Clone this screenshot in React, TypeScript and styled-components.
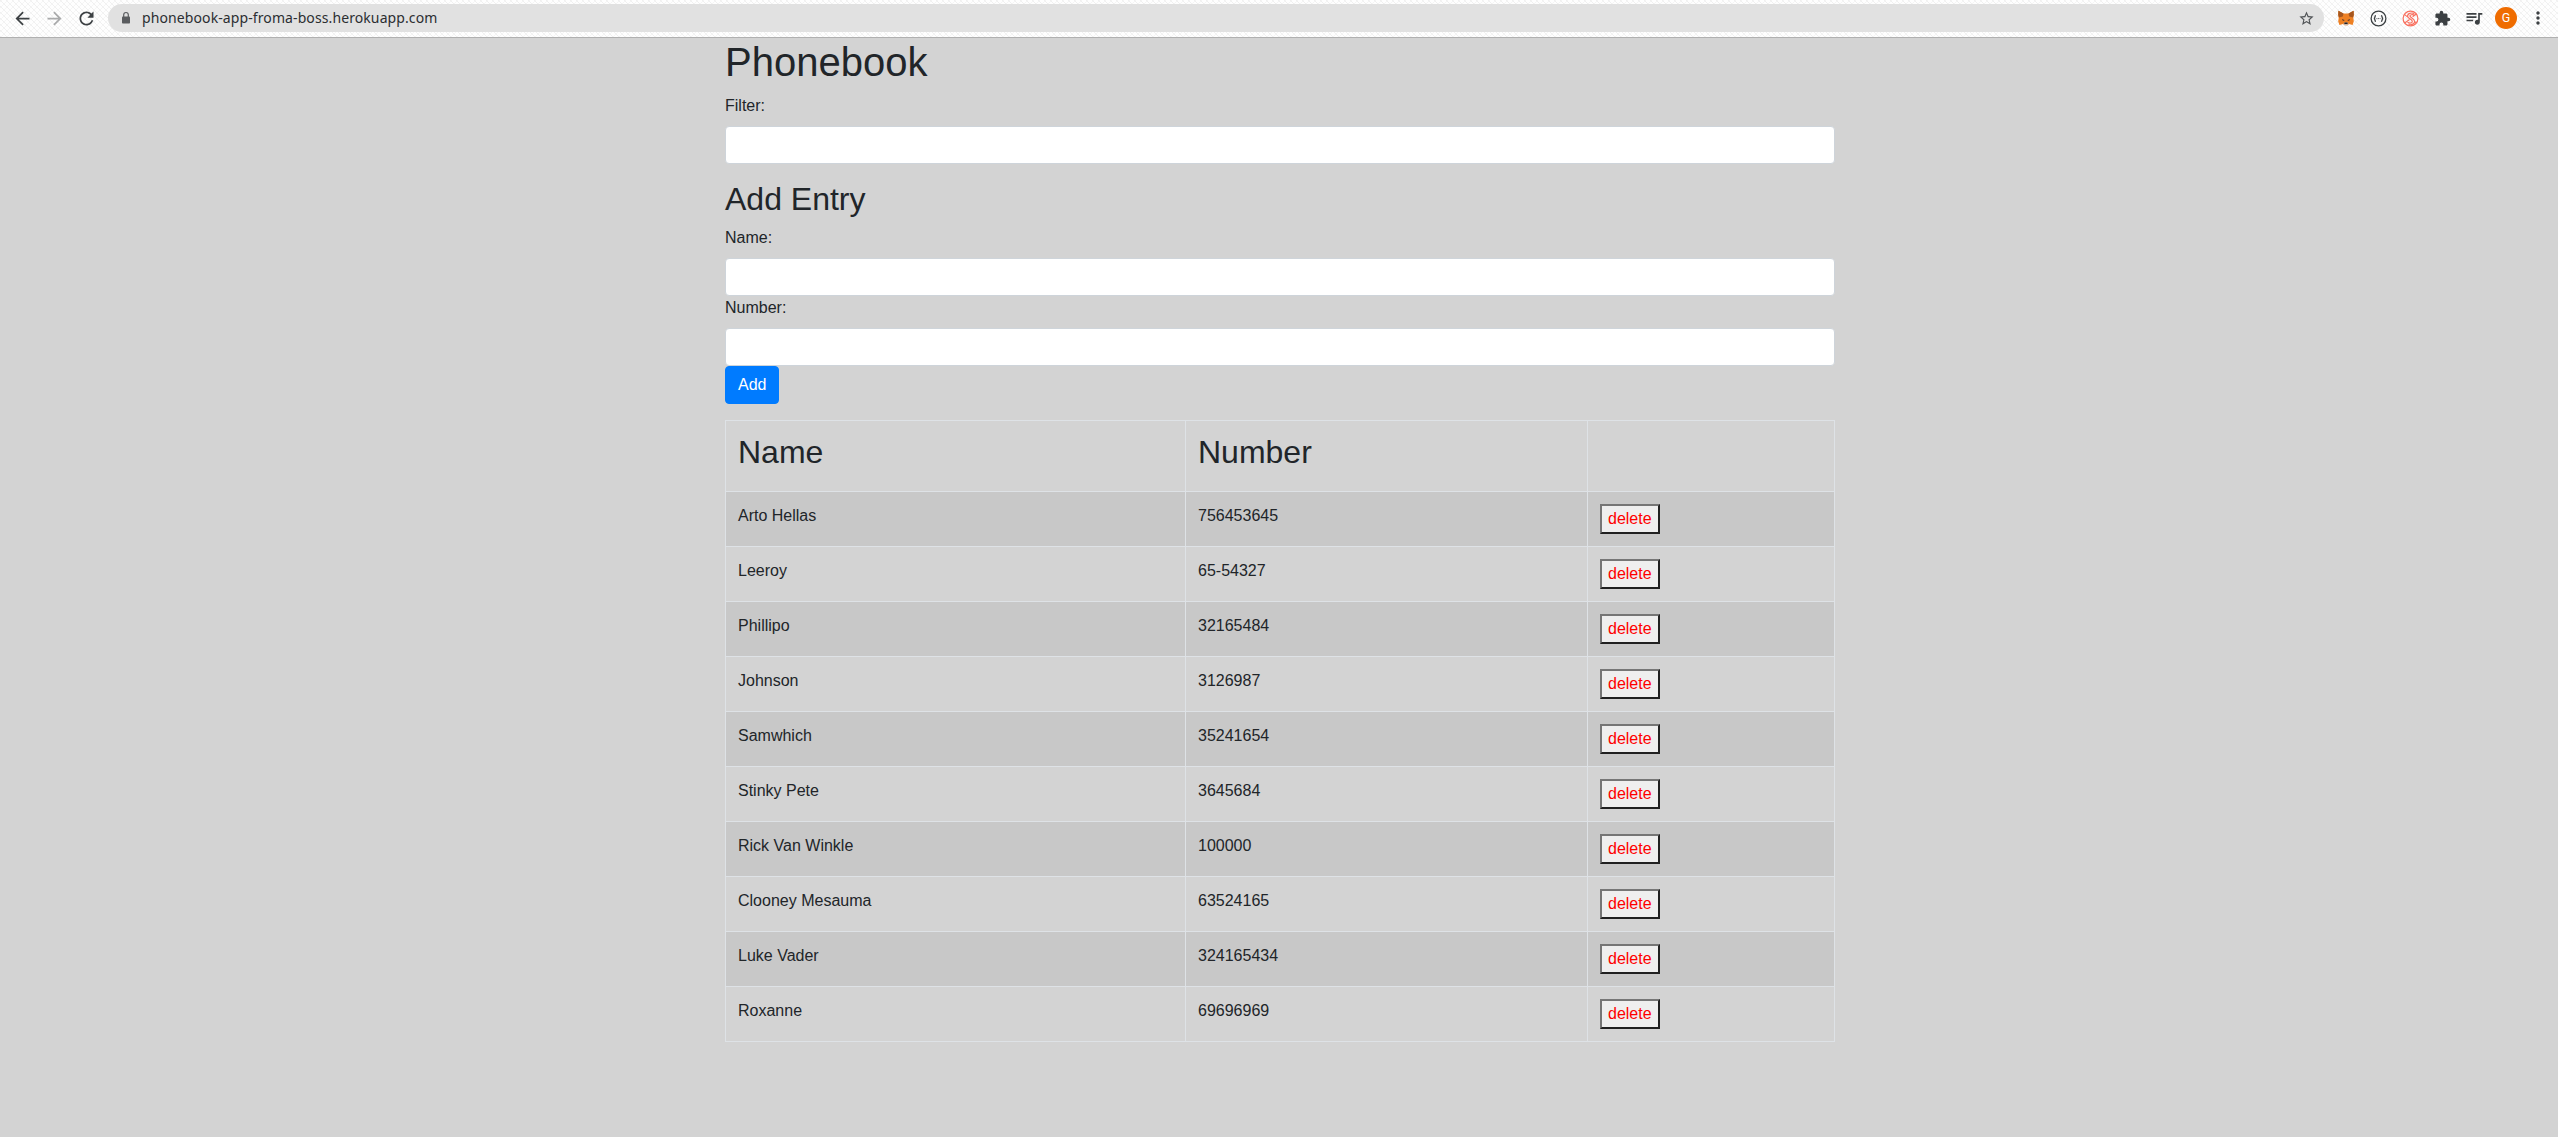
import React from "react";
import styled, { createGlobalStyle } from "styled-components";

const Global = createGlobalStyle`
  *, *::before, *::after { box-sizing: border-box; }
  body {
    margin: 0;
    background: #d3d3d3;
    color: #212529;
    font: 400 16px/1.5 "Liberation Sans", Arial, sans-serif;
  }
`;

const Page = styled.div`
  display: flex;
  flex-direction: column;
  height: 1137px;
  overflow: hidden;
`;

const Toolbar = styled.header`
  display: flex;
  align-items: center;
  flex: 0 0 38px;
  padding: 0 4px 1px 6px;
  border-bottom: 1px solid #b0b0b0;
  background-color: #fefefe;
  background-image:
    repeating-linear-gradient(45deg, #f0f0f0 0 1px, transparent 1px 4.243px),
    repeating-linear-gradient(-45deg, #f5f5f5 0 1px, transparent 1px 4.243px);
`;

const IconSlot = styled.span<{ $width?: number; $color?: string; $size?: number }>`
  display: flex;
  flex: none;
  justify-content: center;
  width: ${(p) => p.$width ?? 32}px;
  color: ${(p) => p.$color ?? "#3c4043"};
  svg {
    flex: none;
    width: ${(p) => p.$size ?? 21}px;
    height: ${(p) => p.$size ?? 21}px;
    fill: currentColor;
  }
`;

const AddressBar = styled.div`
  display: flex;
  align-items: center;
  flex: 1;
  height: 28px;
  margin: 0 6px;
  padding: 0 8px 0 10px;
  border-radius: 14px;
  background: #e1e1e1;
`;

const Url = styled.span`
  flex: 1;
  margin-left: 8px;
  font: 14px/20px "Noto Sans", sans-serif;
  letter-spacing: 0.1px;
  color: #2b2e31;
`;

const Avatar = styled.span`
  display: flex;
  align-items: center;
  justify-content: center;
  width: 22px;
  height: 22px;
  border-radius: 50%;
  background: #ef6c00;
  color: #fff;
  font: 12.5px/1 Roboto, sans-serif;
`;

const Container = styled.main`
  width: 1110px;
  margin-left: 725px;
`;

const Title = styled.h1`
  margin: 0 0 8px;
  font-size: 40px;
  font-weight: 500;
  line-height: 1.2;
`;

const Heading = styled.h2`
  margin: 0 0 8px;
  font-size: 32px;
  font-weight: 500;
  line-height: 1.2;
`;

const ColumnHeading = styled(Heading)`
  line-height: 38px;
`;

const FormGroup = styled.div`
  margin-bottom: 16px;
`;

const Label = styled.label`
  display: block;
  margin-bottom: 8px;
`;

const Input = styled.input`
  display: block;
  width: 100%;
  height: 38px;
  padding: 6px 12px;
  border: 1px solid #ced4da;
  border-radius: 4px;
  background: #fff;
  font: inherit;
`;

const AddButton = styled.button`
  display: block;
  padding: 6px 12px;
  border: 1px solid #007bff;
  border-radius: 4px;
  background: #007bff;
  color: #fff;
  font: inherit;
`;

const Table = styled.table`
  width: 1109px;
  margin-top: -0.4px;
  table-layout: fixed;
  border-collapse: collapse;
  border: 1px solid #dee2e6;
`;

const Col = styled.col<{ $width: number }>`
  width: ${(p) => p.$width}px;
`;

const Row = styled.tr<{ $striped?: boolean }>`
  background: ${(p) => (p.$striped ? "rgba(0, 0, 0, 0.05)" : "transparent")};
`;

const Cell = styled.td`
  padding: 12px;
  border: 1px solid #dee2e6;
  vertical-align: top;
`;

const DeleteButton = styled.button`
  display: block;
  height: 30px;
  padding: 1px 6px;
  border: 2px solid;
  border-color: #767676 #212121 #212121 #767676;
  background: #efefef;
  color: red;
  font: inherit;
`;

const people: [string, string][] = [
  ["Arto Hellas", "756453645"],
  ["Leeroy", "65-54327"],
  ["Phillipo", "32165484"],
  ["Johnson", "3126987"],
  ["Samwhich", "35241654"],
  ["Stinky Pete", "3645684"],
  ["Rick Van Winkle", "100000"],
  ["Clooney Mesauma", "63524165"],
  ["Luke Vader", "324165434"],
  ["Roxanne", "69696969"],
];

const Glyph = ({ d }: { d: string }) => (
  <svg viewBox="0 0 24 24">
    <path d={d} />
  </svg>
);

const BACK = "M20 11H7.83l5.59-5.59L12 4l-8 8 8 8 1.41-1.41L7.83 13H20v-2z";
const FORWARD = "M12 4l-1.41 1.41L16.17 11H4v2h12.17l-5.58 5.59L12 20l8-8z";
const RELOAD =
  "M17.65 6.35C16.2 4.9 14.21 4 12 4c-4.42 0-7.99 3.58-7.99 8s3.57 8 7.99 8c3.73 0 6.84-2.55 7.73-6h-2.08c-.82 2.33-3.04 4-5.65 4-3.31 0-6-2.69-6-6s2.69-6 6-6c1.66 0 3.14.69 4.22 1.78L13 11h7V4l-2.35 2.35z";
const STAR =
  "M22 9.24l-7.19-.62L12 2 9.19 8.63 2 9.24l5.46 4.73L5.82 21 12 17.27 18.18 21l-1.63-7.03L22 9.24zM12 15.4l-3.76 2.27 1-4.28-3.32-2.88 4.38-.38L12 6.1l1.71 4.04 4.38.38-3.32 2.88 1 4.28L12 15.4z";
const PUZZLE =
  "M20.5 11H19V7c0-1.1-.9-2-2-2h-4V3.5a2.5 2.5 0 0 0-5 0V5H4c-1.1 0-2 .9-2 2v3.8h1.5a2.7 2.7 0 0 1 0 5.4H2V20c0 1.1.9 2 2 2h3.8v-1.5a2.7 2.7 0 0 1 5.4 0V22H17c1.1 0 2-.9 2-2v-4h1.5a2.5 2.5 0 0 0 0-5z";
const QUEUE =
  "M15 6H3v2h12V6zm0 4H3v2h12v-2zM3 16h8v-2H3v2zM17 6v8.18c-.31-.11-.65-.18-1-.18-1.66 0-3 1.34-3 3s1.34 3 3 3 3-1.34 3-3V8h3V6h-5z";
const DOTS =
  "M12 8c1.1 0 2-.9 2-2s-.9-2-2-2-2 .9-2 2 .9 2 2 2zm0 2c-1.1 0-2 .9-2 2s.9 2 2 2 2-.9 2-2-.9-2-2-2zm0 6c-1.1 0-2 .9-2 2s.9 2 2 2 2-.9 2-2-.9-2-2-2z";

const Lock = () => (
  <svg viewBox="0 0 16 16">
    <rect x="4" y="6.5" width="8" height="7" rx="0.8" />
    <path d="M5.7 7V4.8a2.3 2.3 0 0 1 4.6 0V7" fill="none" stroke="currentColor" strokeWidth="1.2" />
  </svg>
);

const Fox = () => (
  <svg viewBox="0 0 16 16">
    <path d="M.4.800L5.500 3.500h5L15.600.800 15.800 5l-.5 3 .5 3.200-1.200 3.700-3.600-.9L9.500 15.300h-3L5 14l-3.600.9L.2 11.200.7 8 .2 5z" fill="#ee8023" />
    <path d="M.4.800L5.500 3.500 4.800 6.500 1 7.600.2 5zM15.600.800L10.500 3.500l.7 3 3.800 1.100.8-2.600z" fill="#a5561f" />
    <path d="M4 8.900l2.500 1.200-.5.800L4.300 10.300zM12 8.900L9.500 10.100l.5.800 1.700-.6z" fill="#5b3a2a" />
    <path d="M5.500 13.200l1-.7h3l1 .7-1 2.100h-3z" fill="#c9b8aa" />
    <path d="M6.500 12.600h3l.2 1.400H6.300z" fill="#22222a" />
  </svg>
);

const Braces = () => (
  <svg viewBox="0 0 17 17">
    <g fill="none" stroke="#3c4043" strokeWidth="1.300">
      <circle cx="8.5" cy="8.5" r="7.400" />
      <path d="M6 5.700c-1.100 0-1.100.5-1.100 1.400S4.600 8.500 3.800 8.500c.8 0 1.100.5 1.100 1.400s0 1.400 1.100 1.400M11 5.700c1.100 0 1.100.5 1.100 1.400s.3 1.400 1.100 1.400c-.8 0-1.100.5-1.100 1.400s0 1.400-1.100 1.400" />
      <path d="M6.500 8.600h.9M8.050 8.600h.9M9.600 8.600h.9" strokeWidth="0.9" />
    </g>
  </svg>
);

const Scribble = () => (
  <svg viewBox="0 0 17 17">
    <g fill="none" stroke="#f9705f" strokeWidth="1.200">
      <circle cx="8.5" cy="8.5" r="7.400" />
      <path d="M12.300 3.600C9.500 2.200 5.300 3.600 5.600 6.300c.3 2.200 4.600 2.700 4.700 5 .1 1.600-2.400 2.500-4.800 1" />
      <path d="M12.600 5.200C10.400 4 7.700 4.800 8 6.200c.4 1.700 4.600 2.300 4.600 5.200 0 2.400-2.800 3.800-6.100 3.200M2.600 13l5-3.400M10.600 6.800l4-3M2.600 4.600l2.900 2.300M12.500 11.500l1.600 1.400" />
    </g>
  </svg>
);

export default function App() {
  return (
    <>
      <Global />
      <Page>
        <Toolbar>
          <IconSlot><Glyph d={BACK} /></IconSlot>
          <IconSlot $color="#a9aaab"><Glyph d={FORWARD} /></IconSlot>
          <IconSlot><Glyph d={RELOAD} /></IconSlot>
          <AddressBar>
            <IconSlot $size={16} $width={16} $color="#5a5c5f"><Lock /></IconSlot>
            <Url>phonebook-app-froma-boss.herokuapp.com</Url>
            <IconSlot $size={17} $width={20} $color="#505356"><Glyph d={STAR} /></IconSlot>
          </AddressBar>
          <IconSlot $size={16}><Fox /></IconSlot>
          <IconSlot $size={17}><Braces /></IconSlot>
          <IconSlot $size={17}><Scribble /></IconSlot>
          <IconSlot $size={17}><Glyph d={PUZZLE} /></IconSlot>
          <IconSlot $size={20}><Glyph d={QUEUE} /></IconSlot>
          <IconSlot><Avatar>G</Avatar></IconSlot>
          <IconSlot $size={20}><Glyph d={DOTS} /></IconSlot>
        </Toolbar>
        <Container>
          <Title>Phonebook</Title>
          <FormGroup>
            <Label htmlFor="filter">Filter:</Label>
            <Input id="filter" />
          </FormGroup>
          <Heading>Add Entry</Heading>
          <FormGroup>
            <Label htmlFor="name">Name:</Label>
            <Input id="name" />
            <Label htmlFor="number">Number:</Label>
            <Input id="number" />
            <AddButton>Add</AddButton>
          </FormGroup>
          <Table>
            <colgroup>
              <Col $width={460} />
              <Col $width={402} />
              <Col $width={247} />
            </colgroup>
            <tbody>
              <Row>
                <Cell><ColumnHeading>Name</ColumnHeading></Cell>
                <Cell><ColumnHeading>Number</ColumnHeading></Cell>
                <Cell />
              </Row>
              {people.map(([name, number], i) => (
                <Row key={name} $striped={i % 2 === 0}>
                  <Cell>{name}</Cell>
                  <Cell>{number}</Cell>
                  <Cell><DeleteButton>delete</DeleteButton></Cell>
                </Row>
              ))}
            </tbody>
          </Table>
        </Container>
      </Page>
    </>
  );
}
